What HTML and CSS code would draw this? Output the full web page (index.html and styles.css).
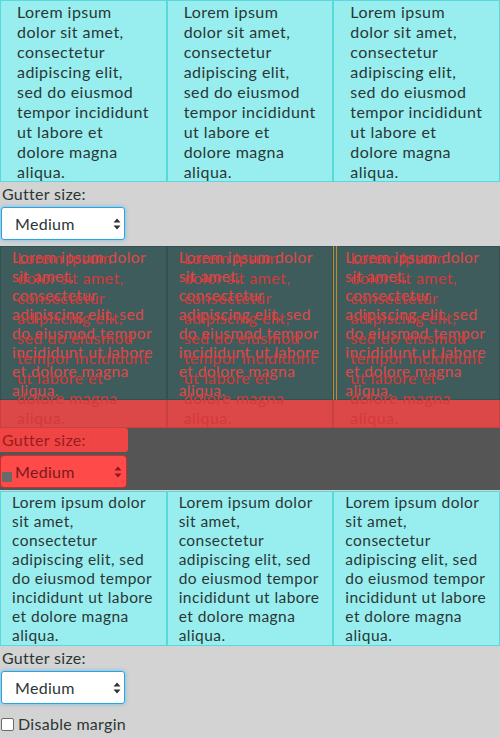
FILE: index.html
```html
<!DOCTYPE html>
<html>
<head>
<meta charset="utf-8">
<link rel="stylesheet" href="styles.css">
</head>
<body>
<div class="page">
  <div class="grid grid-a">
    <div class="cell">Lorem ipsum dolor sit amet, consectetur adipiscing elit, sed do eiusmod tempor incididunt ut labore et dolore magna aliqua.</div>
    <div class="cell">Lorem ipsum dolor sit amet, consectetur adipiscing elit, sed do eiusmod tempor incididunt ut labore et dolore magna aliqua.</div>
    <div class="cell">Lorem ipsum dolor sit amet, consectetur adipiscing elit, sed do eiusmod tempor incididunt ut labore et dolore magna aliqua.</div>
  </div>
  <div class="label">Gutter size:</div>
  <div class="select">
    <span>Medium</span>
    <svg class="arrows" width="8" height="12" viewBox="0 0 8 12"><path d="M4 0.5 L7.5 4.5 H0.5 Z M4 11.5 L7.5 7.5 H0.5 Z" fill="#333"/></svg>
  </div>

  <div class="diff">
    <div class="grid grid-a layer-bg">
      <div class="cell"></div><div class="cell"></div><div class="cell"></div>
    </div>
    <div class="grid grid-b layer-b">
      <div class="cell">Lorem ipsum dolor sit amet, consectetur adipiscing elit, sed do eiusmod tempor incididunt ut labore et dolore magna aliqua.</div>
      <div class="cell">Lorem ipsum dolor sit amet, consectetur adipiscing elit, sed do eiusmod tempor incididunt ut labore et dolore magna aliqua.</div>
      <div class="cell">Lorem ipsum dolor sit amet, consectetur adipiscing elit, sed do eiusmod tempor incididunt ut labore et dolore magna aliqua.</div>
    </div>
    <div class="grid grid-a layer-a">
      <div class="cell">Lorem ipsum dolor sit amet, consectetur adipiscing elit, sed do eiusmod tempor incididunt ut labore et dolore magna aliqua.</div>
      <div class="cell">Lorem ipsum dolor sit amet, consectetur adipiscing elit, sed do eiusmod tempor incididunt ut labore et dolore magna aliqua.</div>
      <div class="cell">Lorem ipsum dolor sit amet, consectetur adipiscing elit, sed do eiusmod tempor incididunt ut labore et dolore magna aliqua.</div>
    </div>
    <div class="gold g1"></div>
    <div class="gold g2"></div>
    <div class="diff-controls">
      <div class="diff-label">Gutter size:</div>
      <div class="diff-select">
        <span class="ghost-box"></span>
        <span>Medium</span>
        <svg class="arrows" width="8" height="12" viewBox="0 0 8 12"><path d="M4 0.5 L7.5 4.5 H0.5 Z M4 11.5 L7.5 7.5 H0.5 Z" fill="#8a1a1a"/></svg>
      </div>
    </div>
  </div>

  <div class="grid grid-b plain-b">
    <div class="cell">Lorem ipsum dolor sit amet, consectetur adipiscing elit, sed do eiusmod tempor incididunt ut labore et dolore magna aliqua.</div>
    <div class="cell">Lorem ipsum dolor sit amet, consectetur adipiscing elit, sed do eiusmod tempor incididunt ut labore et dolore magna aliqua.</div>
    <div class="cell">Lorem ipsum dolor sit amet, consectetur adipiscing elit, sed do eiusmod tempor incididunt ut labore et dolore magna aliqua.</div>
  </div>
  <div class="label">Gutter size:</div>
  <div class="select">
    <span>Medium</span>
    <svg class="arrows" width="8" height="12" viewBox="0 0 8 12"><path d="M4 0.5 L7.5 4.5 H0.5 Z M4 11.5 L7.5 7.5 H0.5 Z" fill="#333"/></svg>
  </div>
  <label class="check"><span class="box"></span>Disable margin</label>
</div>
</body>
</html>
```
FILE: styles.css
```css
html, body {
  margin: 0;
  padding: 0;
  background: #d3d3d3;
}
body {
  font-family: Lato, "Noto Sans", sans-serif;
  color: #2b3636;
  width: 500px;
  height: 738px;
  overflow: hidden;
  letter-spacing: 0.3px;
}
.page {
  display: flex;
  flex-direction: column;
}
.grid {
  display: grid;
  grid-template-columns: repeat(3, 1fr);
}
.cell {
  background: #98eeee;
  border: 1px solid #5ad9dc;
}
.grid-a .cell {
  padding: 1px 16px 0 16px;
  font-size: 16px;
  line-height: 20px;
  letter-spacing: 0.45px;
  height: 182px;
  box-sizing: border-box;
}
.grid-b .cell {
  padding: 1px 11px 0 11px;
  font-size: 15.5px;
  line-height: 19px;
  letter-spacing: 0.45px;
  height: 155px;
  box-sizing: border-box;
}
.label {
  font-size: 16px;
  line-height: 20px;
  padding: 2px 0 0 2px;
}
.select {
  margin: 3px 0 0 1px;
  width: 124px;
  height: 33px;
  box-sizing: border-box;
  background: #fff;
  border: 1px solid #22a6e8;
  border-radius: 3px;
  box-shadow: 0 0 4px rgba(34, 166, 232, 0.55);
  display: flex;
  align-items: center;
  justify-content: space-between;
  padding: 0 3px 0 13px;
  font-size: 16px;
}
.arrows { display: block; }

/* diff overlay region */
.diff {
  margin-top: 6px;
  height: 244px;
  background: #555555;
  position: relative;
  overflow: hidden;
}
.layer-bg .cell {
  background: #dc4848;
  border-color: #c84040;
  color: transparent;
}
.layer-b {
  position: absolute;
  top: 0;
  left: 0;
  right: 0;
}
.layer-b .cell {
  background: #3e5c5c;
  border-color: #345050;
  color: #e04848;
  height: 154px;
}
.layer-a {
  position: absolute;
  top: 0;
  left: 0;
  right: 0;
}
.layer-a .cell {
  background: transparent;
  border-color: transparent;
  color: #d23a3a;
}
.gold {
  position: absolute;
  top: 0;
  width: 1px;
  height: 154px;
  background: #c08a2c;
}
.g1 { left: 333px; }
.g2 { left: 336px; }
.diff-controls {
  position: absolute;
  left: 0;
  top: 182px;
  display: flex;
  flex-direction: column;
  gap: 3px;
}
.diff-label {
  width: 128px;
  height: 24px;
  box-sizing: border-box;
  background: #f04545;
  border-radius: 0 3px 3px 0;
  color: #9a1c1c;
  font-size: 16px;
  line-height: 20px;
  padding: 2px 0 0 2px;
}
.diff-select {
  width: 127px;
  height: 33px;
  box-sizing: border-box;
  background: #ff4a4a;
  border: 1px solid #c53030;
  border-radius: 4px;
  display: flex;
  align-items: center;
  padding: 0 4px 0 1px;
  color: #7a1a1a;
  font-size: 16px;
  position: relative;
}
.diff-select span:nth-child(2) { margin-left: 3px; flex: 1; }
.ghost-box {
  width: 10px;
  height: 10px;
  background: #6a6a6a;
  align-self: flex-end;
  margin-bottom: 5px;
}

.plain-b { margin-top: 1px; }
.check {
  display: flex;
  align-items: center;
  gap: 4px;
  font-size: 16px;
  line-height: 20px;
  margin-top: 10px;
  padding-left: 1px;
}
.box {
  width: 11px;
  height: 11px;
  border: 1px solid #6c6c6c;
  border-radius: 2px;
  background: #fff;
}
```
